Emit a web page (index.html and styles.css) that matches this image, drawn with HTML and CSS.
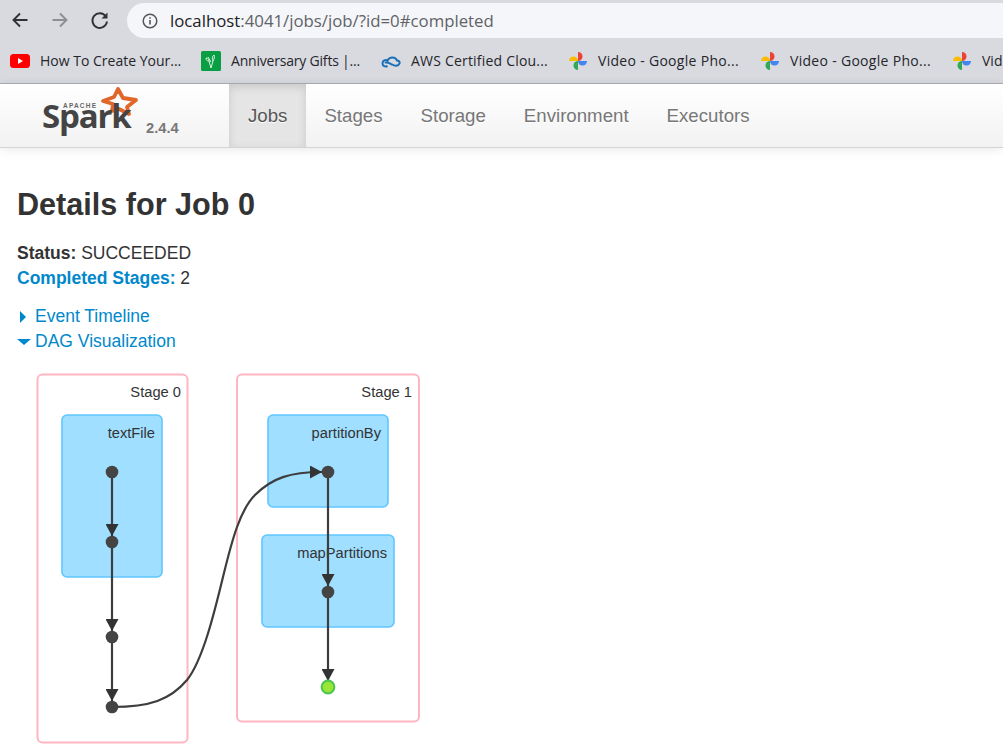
FILE: index.html
```html
<!DOCTYPE html>
<html lang="en">

<head>
    <meta charset="UTF-8">
    <meta name="viewport" content="width=device-width, initial-scale=1.0">
    <title>Details for Job 0</title>
    <link rel="stylesheet" href="styles.css">
</head>

<body>
    <div class="toolbar">
        <svg class="tool-icon" viewBox="0 0 20 20"><path d="M17.500 10H3.500M10 3.500L3.500 10l6.500 6.500" fill="none" stroke="#2f3136" stroke-width="1.900"/></svg>
        <svg class="tool-icon" viewBox="0 0 20 20"><path d="M2.500 10h14M10 3.500l6.500 6.500-6.500 6.500" fill="none" stroke="#8d8e93" stroke-width="1.900"/></svg>
        <svg class="tool-icon" viewBox="0 0 20 20"><path d="M15.800 6.500A7.300 7.300 0 1 0 17 11.500" fill="none" stroke="#2f3136" stroke-width="1.900"/><path d="M17.500 2.500v6h-6z" fill="#2f3136"/></svg>
        <div class="urlbar">
            <svg class="info-icon" viewBox="0 0 16 16"><circle cx="8" cy="8" r="6.800" fill="none" stroke="#55565a" stroke-width="1.500"/><path d="M8 7v4.500M8 4.300v1.500" stroke="#55565a" stroke-width="1.600"/></svg>
            <span class="host">localhost</span><span class="path">:4041/jobs/job/?id=0#completed</span>
        </div>
    </div>

    <div class="bookmarks">
        <div class="bookmark b1">
            <svg class="fav" viewBox="0 0 20 20"><rect y="3" width="20" height="14" rx="3.500" fill="#f00"/><path d="M8 7l5 3-5 3z" fill="#fff"/></svg>
            How To Create Your...
        </div>
        <div class="bookmark b2">
            <svg class="fav" viewBox="0 0 20 20"><rect width="20" height="20" rx="1.500" fill="#0a9e44"/><path d="M5 7c2 0 3 1 3 3M8 10l2 7 2-7c1-2 2-4 1-6-2 1-2 4-1 6M7 6l3 5M5 7c0 2 1 3 3 3" fill="none" stroke="#d8f2df" stroke-width="1"/></svg>
            Anniversary Gifts |...
        </div>
        <div class="bookmark b3">
            <svg class="fav" viewBox="0 0 20 20"><path d="M1.500 12.500c0-3 3-4 5-3 2-4 8-4 9.500 0 2 0 3 1.500 2.500 3-1 3-5 2.500-7.500 1-3-1.500-5-3-7-1.500M1.500 12.500c0 2.500 3 3.500 5 2.500" fill="none" stroke="#1a6fb8" stroke-width="2"/></svg>
            AWS Certified Clou...
        </div>
        <div class="bookmark b4">
            <svg class="fav" viewBox="0 0 20 20"><use href="#pinwheel"/></svg>
            Video - Google Pho...
        </div>
        <div class="bookmark b4">
            <svg class="fav" viewBox="0 0 20 20"><use href="#pinwheel"/></svg>
            Video - Google Pho...
        </div>
        <div class="bookmark">
            <svg class="fav" viewBox="0 0 20 20">
                <defs>
                    <g id="pinwheel">
                        <path d="M1 10a4.500 4.500 0 0 1 9 0z" fill="#fbbc04"/>
                        <path d="M10 1a4.500 4.500 0 0 1 0 9z" fill="#ea4335"/>
                        <path d="M19 10a4.500 4.500 0 0 1-9 0z" fill="#4285f4"/>
                        <path d="M10 19a4.500 4.500 0 0 1 0-9z" fill="#34a853"/>
                    </g>
                </defs>
                <use href="#pinwheel"/>
            </svg>
            Vid
        </div>
    </div>

    <div class="navbar">
        <div class="brand">
            <svg class="logo" viewBox="0 0 130 60">
                <path d="M88 5l5 9 13 2-9 7 2 7-10-5-7 2 1-7-10-3 11-4z" fill="none" stroke="#e0662a" stroke-width="3.800" stroke-linejoin="round"/>
                <text x="33" y="24" class="logo-apache">APACHE</text>
                <text x="12" y="44" class="logo-spark">Spark</text>
            </svg>
            <span class="version">2.4.4</span>
        </div>
        <a class="tab active">Jobs</a>
        <a class="tab">Stages</a>
        <a class="tab">Storage</a>
        <a class="tab">Environment</a>
        <a class="tab">Executors</a>
    </div>

    <div class="content">
        <h3>Details for Job 0</h3>
        <div class="summary">
            <div><strong>Status:</strong> SUCCEEDED</div>
            <div><strong class="link">Completed Stages:</strong> 2</div>
        </div>
        <div class="toggles">
            <div class="toggle"><span class="arrow-right"></span>Event Timeline</div>
            <div class="toggle"><span class="arrow-down"></span>DAG Visualization</div>
        </div>
        <svg class="dag" viewBox="17 364 420 388">
            <defs>
                <marker id="head" markerWidth="12" markerHeight="13" refX="12" refY="6.500" orient="auto" markerUnits="userSpaceOnUse">
                    <path d="M0 0L12 6.500 0 13z" fill="#333"/>
                </marker>
            </defs>

            <rect class="stage" x="37.500" y="374.500" width="150" height="368" rx="5"/>
            <rect class="stage" x="237" y="374.500" width="182" height="347" rx="5"/>
            <text class="stage-label" x="181" y="397">Stage 0</text>
            <text class="stage-label" x="412" y="397">Stage 1</text>

            <rect class="cluster" x="62" y="415" width="100" height="162" rx="5"/>
            <rect class="cluster" x="268" y="415" width="120" height="92" rx="5"/>
            <rect class="cluster" x="262" y="535" width="132" height="92" rx="5"/>
            <text class="cluster-label" x="155" y="438">textFile</text>
            <text class="cluster-label" x="381" y="438">partitionBy</text>
            <text class="cluster-label" x="387" y="558">mapPartitions</text>

            <path class="edge" d="M112 472V536" marker-end="url(#head)"/>
            <path class="edge" d="M112 542V631" marker-end="url(#head)"/>
            <path class="edge" d="M112 637V701" marker-end="url(#head)"/>
            <path class="edge" d="M328 472V586" marker-end="url(#head)"/>
            <path class="edge" d="M328 592V681" marker-end="url(#head)"/>
            <path class="edge" d="M112 707C150 707 170 700 187 680C203 660 215 610 223 577C232 540 240 510 255 495C272 478 290 472 322 472" marker-end="url(#head)"/>

            <circle class="node" cx="112" cy="472" r="6.300"/>
            <circle class="node" cx="112" cy="542" r="6.300"/>
            <circle class="node" cx="112" cy="637" r="6.300"/>
            <circle class="node" cx="112" cy="707" r="6.300"/>
            <circle class="node" cx="328" cy="472" r="6.300"/>
            <circle class="node" cx="328" cy="592" r="6.300"/>
            <circle class="node-cached" cx="328" cy="687" r="6.300"/>
        </svg>
    </div>
</body>

</html>
```

FILE: styles.css
```css
html, body {
    height: 100%;
    margin: 0;
    overflow: hidden;
    background-color: #fff;
    color: #333;
    font-family: "Liberation Sans", Arial, sans-serif;
}

/* browser chrome */
.toolbar {
    height: 35px;
    padding-top: 3px;
    padding-left: 10px;
    display: flex;
    align-items: center;
    background-color: #d9dae0;
}

.tool-icon {
    width: 20px;
    height: 20px;
    margin-right: 20px;
    margin-bottom: 2px;
    flex: none;
}

.urlbar {
    flex: 1;
    height: 35px;
    margin-left: -3px;
    padding-left: 15px;
    display: flex;
    align-items: center;
    background-color: #f5f6f9;
    border-radius: 18px 0 0 18px;
    font-family: "Open Sans", sans-serif;
    font-size: 16.800px;
    white-space: nowrap;
}

.info-icon {
    width: 16px;
    height: 16px;
    margin-right: 12px;
}

.host {
    color: #202124;
}

.path {
    color: #5f6368;
}

.bookmarks {
    height: 45px;
    padding-left: 10px;
    display: flex;
    align-items: center;
    background-color: #d9dae0;
    border-bottom: 1px solid #aeafb3;
    font-family: "Open Sans", sans-serif;
    font-size: 14px;
    color: #25262a;
    white-space: nowrap;
}

.bookmark {
    display: flex;
    align-items: center;
    flex: none;
}

.b1 { width: 191px; }
.b2 { width: 180px; letter-spacing: -0.200px; }
.b3 { width: 187px; letter-spacing: 0.200px; }
.b4 { width: 192px; letter-spacing: 0.300px; }

.fav {
    width: 20px;
    height: 20px;
    margin-right: 10px;
    flex: none;
}

/* spark nav */
.navbar {
    height: 63px;
    display: flex;
    background-image: linear-gradient(to bottom, #fff, #f2f2f2);
    border-bottom: 1px solid #d4d4d4;
    box-shadow: 0 1px 10px rgba(0, 0, 0, 0.1);
}

.brand {
    width: 229px;
    position: relative;
    flex: none;
}

.logo {
    width: 130px;
    height: 60px;
    margin-left: 30px;
}

.logo-apache {
    font-size: 6.500px;
    font-weight: bold;
    letter-spacing: 1.200px;
    fill: #666;
}

.logo-spark {
    font-family: "Open Sans", sans-serif;
    font-size: 33px;
    font-weight: 700;
    letter-spacing: -1.200px;
    fill: #444;
}

.version {
    position: absolute;
    left: 146px;
    top: 36px;
    font-size: 14.700px;
    font-weight: bold;
    color: #777;
}

.tab {
    padding: 0 19px;
    line-height: 63px;
    font-size: 18.670px;
    color: #777;
    text-shadow: 0 1px 0 #fff;
}

.active {
    color: #555;
    background-color: #e5e5e5;
    box-shadow: inset 0 3px 8px rgba(0, 0, 0, 0.125);
}

.active + .tab {
    margin-left: -1px;
}

/* page */
.content {
    padding: 0 17px;
}

h3 {
    margin: 37px 0 0;
    font-size: 30.600px;
    line-height: 38px;
    color: #333;
}

.summary {
    margin-top: 18px;
    font-size: 17.500px;
    line-height: 25px;
}

.link {
    color: #0088cc;
}

.toggles {
    margin-top: 13px;
    font-size: 17.500px;
    line-height: 25px;
    color: #0088cc;
}

.toggle {
    display: flex;
    align-items: center;
}

.arrow-right {
    width: 0;
    height: 0;
    margin-left: 3px;
    margin-right: 9px;
    border-left: 6px solid #0088cc;
    border-top: 6px solid transparent;
    border-bottom: 6px solid transparent;
}

.arrow-down {
    width: 0;
    height: 0;
    margin-right: 4px;
    border-top: 6px solid #0088cc;
    border-left: 7px solid transparent;
    border-right: 7px solid transparent;
}

/* dag */
.dag {
    display: block;
    width: 420px;
    height: 388px;
    margin-top: 10px;
}

.stage {
    fill: #fff;
    stroke: #ffb6c1;
    stroke-width: 2px;
}

.cluster {
    fill: #a0dfff;
    stroke: #5fc6ff;
    stroke-width: 1.600px;
}

.stage-label, .cluster-label {
    font-size: 14.700px;
    text-anchor: end;
    fill: #333;
}

.edge {
    fill: none;
    stroke: #3d3d3d;
    stroke-width: 2.200px;
}

.node {
    fill: #444;
}

.node-cached {
    fill: #9ae635;
    stroke: #52c652;
    stroke-width: 2.200px;
}
```
